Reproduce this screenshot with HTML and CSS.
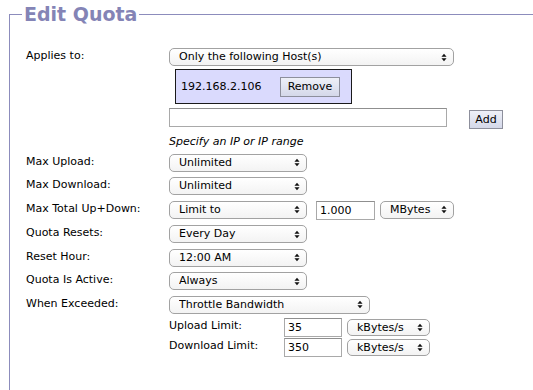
FILE: index.html
```html
<!DOCTYPE html>
<html lang="en">
<head>
<meta charset="utf-8">
<title>Edit Quota</title>
<link rel="stylesheet" href="styles.css">
</head>
<body>
<fieldset class="panel">
  <legend class="panel-title">Edit Quota</legend>
  <div class="form">
    <div class="label">Applies to:</div>
    <div class="field field-stack">
      <span class="sel w-applies"><select><option>Only the following Host(s)</option></select><svg class="arr" viewBox="0 0 7 10"><path d="M3.5 0.5L6.5 4H0.5Z M3.5 9.5L6.5 6H0.5Z"/></svg></span>
      <div class="hosts"><span class="host-ip">192.168.2.106</span><button class="btn btn-remove" type="button">Remove</button></div>
      <div class="add-row"><input class="txt w-ip" type="text"><button class="btn btn-add" type="button">Add</button></div>
      <div class="hint">Specify an IP or IP range</div>
    </div>

    <div class="label">Max Upload:</div>
    <div class="field"><span class="sel w-std"><select><option>Unlimited</option></select><svg class="arr" viewBox="0 0 7 10"><path d="M3.5 0.5L6.5 4H0.5Z M3.5 9.5L6.5 6H0.5Z"/></svg></span></div>

    <div class="label">Max Download:</div>
    <div class="field"><span class="sel w-std"><select><option>Unlimited</option></select><svg class="arr" viewBox="0 0 7 10"><path d="M3.5 0.5L6.5 4H0.5Z M3.5 9.5L6.5 6H0.5Z"/></svg></span></div>

    <div class="label">Max Total Up+Down:</div>
    <div class="field field-row">
      <span class="sel w-std"><select><option>Limit to</option></select><svg class="arr" viewBox="0 0 7 10"><path d="M3.5 0.5L6.5 4H0.5Z M3.5 9.5L6.5 6H0.5Z"/></svg></span>
      <input class="txt w-amount" type="text" value="1.000">
      <span class="sel w-unit"><select><option>MBytes</option></select><svg class="arr" viewBox="0 0 7 10"><path d="M3.5 0.5L6.5 4H0.5Z M3.5 9.5L6.5 6H0.5Z"/></svg></span>
    </div>

    <div class="label">Quota Resets:</div>
    <div class="field"><span class="sel w-std"><select><option>Every Day</option></select><svg class="arr" viewBox="0 0 7 10"><path d="M3.5 0.5L6.5 4H0.5Z M3.5 9.5L6.5 6H0.5Z"/></svg></span></div>

    <div class="label">Reset Hour:</div>
    <div class="field"><span class="sel w-std"><select><option>12:00 AM</option></select><svg class="arr" viewBox="0 0 7 10"><path d="M3.5 0.5L6.5 4H0.5Z M3.5 9.5L6.5 6H0.5Z"/></svg></span></div>

    <div class="label">Quota Is Active:</div>
    <div class="field"><span class="sel w-std"><select><option>Always</option></select><svg class="arr" viewBox="0 0 7 10"><path d="M3.5 0.5L6.5 4H0.5Z M3.5 9.5L6.5 6H0.5Z"/></svg></span></div>

    <div class="label">When Exceeded:</div>
    <div class="field field-stack">
      <span class="sel w-throttle"><select><option>Throttle Bandwidth</option></select><svg class="arr" viewBox="0 0 7 10"><path d="M3.5 0.5L6.5 4H0.5Z M3.5 9.5L6.5 6H0.5Z"/></svg></span>
      <div class="limits">
        <div class="sublabel">Upload Limit:</div>
        <input class="txt w-limit" type="text" value="35">
        <span class="sel w-rate"><select><option>kBytes/s</option></select><svg class="arr" viewBox="0 0 7 10"><path d="M3.5 0.5L6.5 4H0.5Z M3.5 9.5L6.5 6H0.5Z"/></svg></span>
        <div class="sublabel">Download Limit:</div>
        <input class="txt w-limit" type="text" value="350">
        <span class="sel w-rate"><select><option>kBytes/s</option></select><svg class="arr" viewBox="0 0 7 10"><path d="M3.5 0.5L6.5 4H0.5Z M3.5 9.5L6.5 6H0.5Z"/></svg></span>
      </div>
    </div>
  </div>
</fieldset>
</body>
</html>
```

FILE: styles.css
```css
html, body {
  margin: 0;
  padding: 0;
  background: #ffffff;
  overflow: hidden;
}

body {
  font-family: "DejaVu Sans", Verdana, sans-serif;
  font-size: 11px;
  color: #000;
}

.panel {
  margin: 3px 0 0 9px;
  padding: 0 0 60px 0;
  border: 1px solid #8c8cbc;
  border-right: 0;
  min-width: 0;
}

.panel-title {
  margin-left: 12px;
  padding: 0 2px;
  font-size: 19px;
  font-weight: bold;
  color: #8484b6;
  line-height: 22px;
}

.form {
  display: grid;
  grid-template-columns: 143px auto;
  row-gap: 5.5px;
  padding: 23px 0 0 16px;
  justify-items: start;
  align-items: start;
}

.label {
  line-height: 13px;
  padding-top: 1px;
  white-space: nowrap;
}

.field-stack {
  display: flex;
  flex-direction: column;
  align-items: flex-start;
}

.field-row {
  display: flex;
  align-items: flex-start;
}

/* select look */
.sel {
  position: relative;
  display: inline-block;
  height: 18px;
}

.sel select {
  -webkit-appearance: none;
  appearance: none;
  display: block;
  width: 100%;
  height: 100%;
  margin: 0;
  padding: 0 0 0 9px;
  border: 1px solid #a2a2a2;
  border-radius: 5px;
  background: linear-gradient(#ffffff, #f3f3f3);
  font-family: "DejaVu Sans", Verdana, sans-serif;
  font-size: 11px;
  color: #000;
  line-height: 16px;
}

.sel .arr {
  position: absolute;
  right: 7px;
  top: 50%;
  width: 6px;
  height: 9px;
  margin-top: -4.5px;
  fill: #111;
  pointer-events: none;
}

.w-applies { width: 285px; }
.w-std { width: 138px; }
.w-unit { width: 74px; margin-left: 5px; }
.w-throttle { width: 201px; }
.w-rate { width: 83px; height: 17px; }

/* text inputs */
.txt {
  box-sizing: border-box;
  height: 19px;
  margin: 0;
  padding: 0 3px;
  border: 1px solid #a9a9a9;
  border-top-color: #8f8f8f;
  background: #fff;
  font-family: "DejaVu Sans", Verdana, sans-serif;
  font-size: 11px;
  color: #000;
}

.w-ip { width: 278px; }
.w-amount { width: 59px; margin-left: 9px; }
.w-limit { width: 58px; }

/* host list box */
.hosts {
  box-sizing: border-box;
  width: 177px;
  height: 35px;
  margin: 3px 0 0 6px;
  padding: 0 11px 0 5px;
  border: 1px solid #1a1a1a;
  background: #dadafd;
  display: flex;
  align-items: center;
  justify-content: space-between;
}

.btn {
  box-sizing: border-box;
  margin: 0;
  padding: 0;
  border: 1px solid #8d8f9c;
  border-radius: 0;
  background: linear-gradient(#eef0f8, #d4d8e9);
  font-family: "DejaVu Sans", Verdana, sans-serif;
  font-size: 11px;
  color: #000;
}

.btn-remove {
  width: 60px;
  height: 20px;
}

.add-row {
  display: flex;
  align-items: flex-start;
  margin-top: 4px;
}

.btn-add {
  width: 34px;
  height: 19px;
  margin: 2px 0 0 22px;
}

.hint {
  margin-top: 6px;
  font-style: italic;
  line-height: 13px;
}

/* throttle sub-limits */
.limits {
  display: grid;
  grid-template-columns: 110px 58px 83px;
  column-gap: 5px;
  row-gap: 1px;
  align-items: center;
  margin-top: 4px;
}

.sublabel {
  align-self: start;
  line-height: 13px;
  padding-top: 1px;
  white-space: nowrap;
}
```
